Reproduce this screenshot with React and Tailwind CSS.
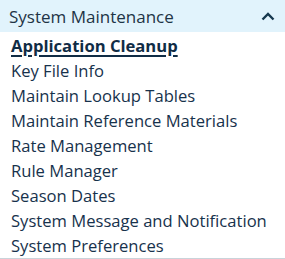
const items = [
  "Key File Info",
  "Maintain Lookup Tables",
  "Maintain Reference Materials",
  "Rate Management",
  "Rule Manager",
  "Season Dates",
  "System Message and Notification",
  "System Preferences",
];

export default function App() {
  return (
    <div
      className="w-[285px] h-[259px] bg-white border-b border-[#c9d3da] flex flex-col"
      style={{ fontFamily: '"Open Sans", "Noto Sans", sans-serif' }}
    >
      <div className="h-[32px] bg-[#e1f3fc] flex items-center justify-between pl-[9px] pr-[10px] shrink-0">
        <span className="text-[17px] text-[#1e3446] leading-none">System Maintenance</span>
        <svg width="14" height="9" viewBox="0 0 14 9">
          <polyline points="1.5,7.5 7,2 12.5,7.5" fill="none" stroke="#16384f" strokeWidth="2.4" />
        </svg>
      </div>
      <ul className="flex flex-col pl-[11px] pt-[1px]">
        <li className="text-[16.6px] leading-[25px] font-bold underline underline-offset-[3px] decoration-[2px] text-[#102c45] whitespace-nowrap">
          Application Cleanup
        </li>
        {items.map((t) => (
          <li key={t} className="text-[16.6px] leading-[25px] text-[#17324c] whitespace-nowrap">
            {t}
          </li>
        ))}
      </ul>
    </div>
  );
}
